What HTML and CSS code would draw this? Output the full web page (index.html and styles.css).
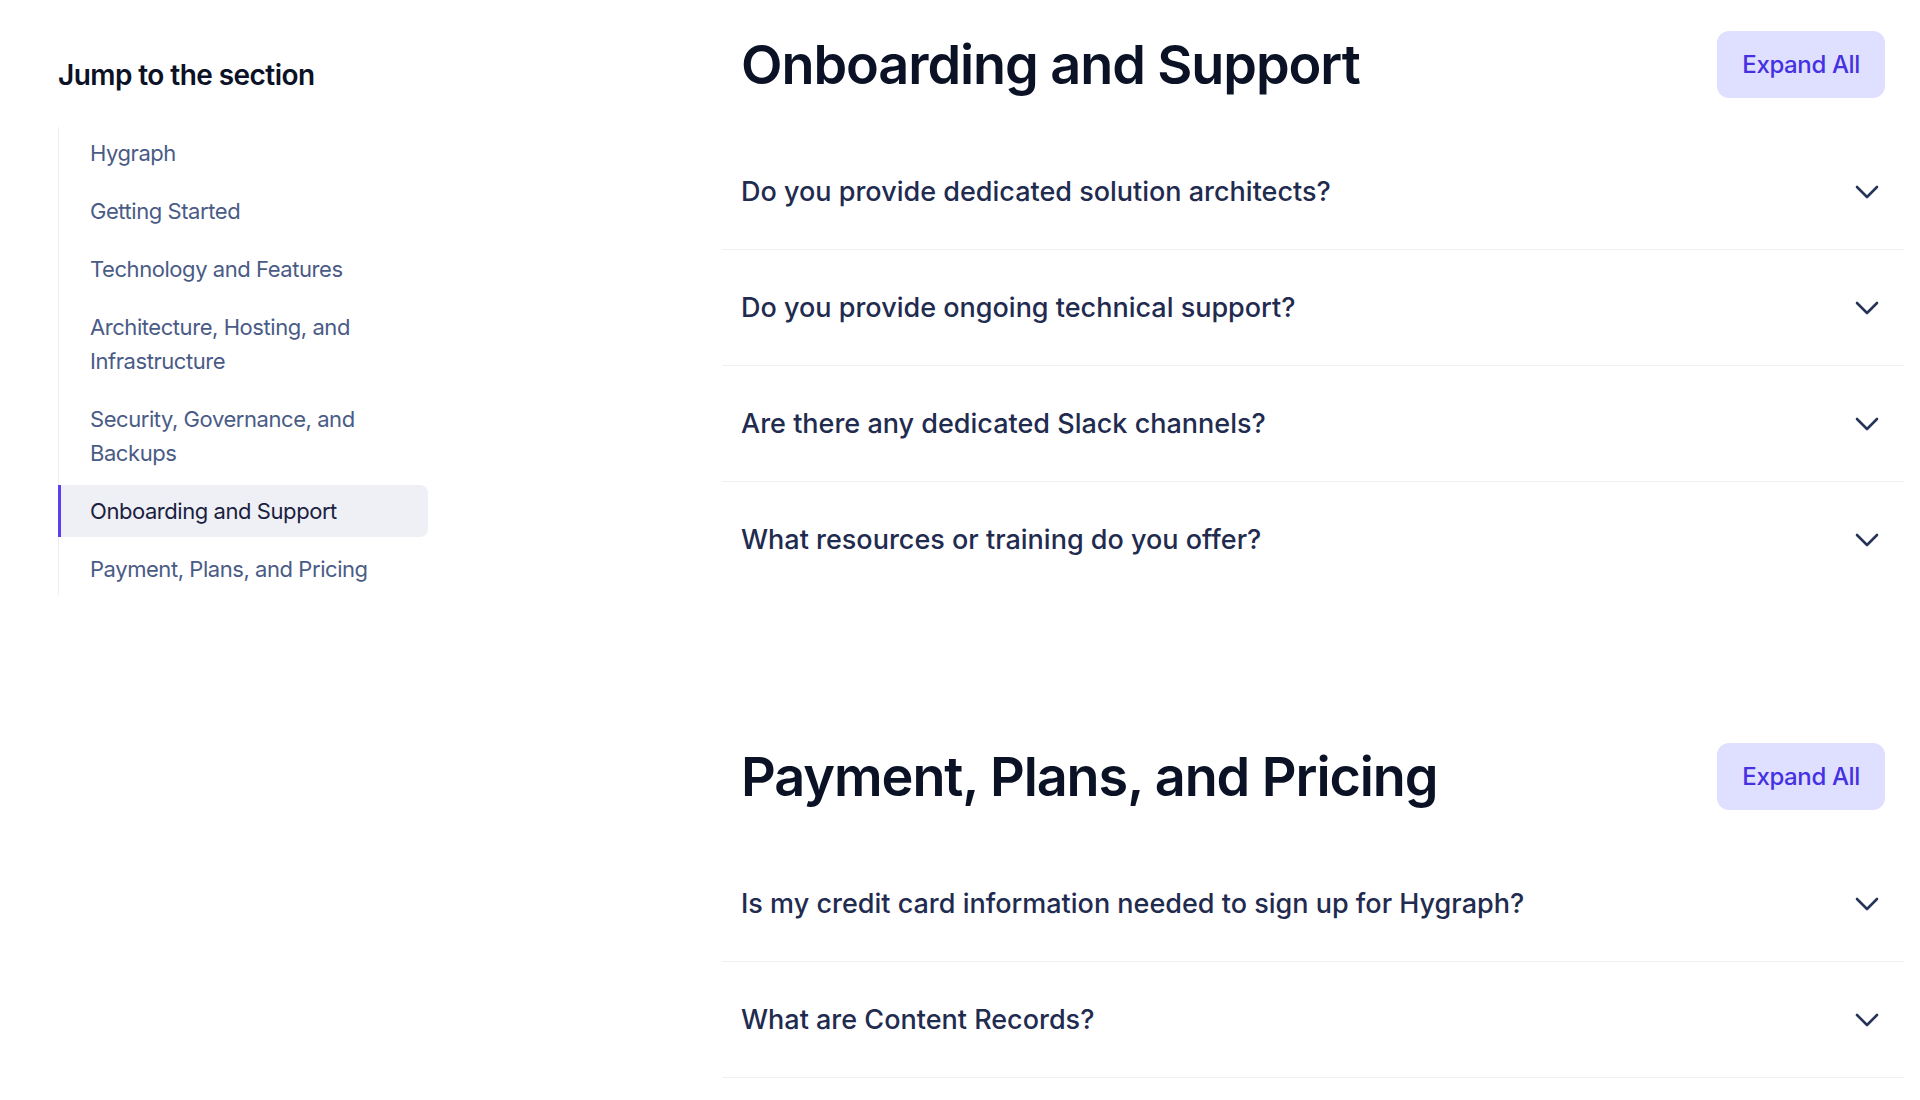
FILE: index.html
```html
<!DOCTYPE html>
<html lang="en">
<head>
    <meta charset="UTF-8">
    <meta name="viewport" content="width=device-width, initial-scale=1.0">
    <title>FAQ - Hygraph</title>
    <link rel="stylesheet" href="styles.css">
</head>
<body>
    <div class="faq-page">
        <!-- left nav -->
        <aside class="jump-nav">
            <h3>Jump to the section</h3>
            <ul class="jump-list">
                <li><a href="#hygraph">Hygraph</a></li>
                <li><a href="#getting-started">Getting Started</a></li>
                <li><a href="#technology">Technology and Features</a></li>
                <li><a href="#architecture">Architecture, Hosting, and Infrastructure</a></li>
                <li><a href="#security">Security, Governance, and Backups</a></li>
                <li class="active"><a href="#onboarding">Onboarding and Support</a></li>
                <li><a href="#payment">Payment, Plans, and Pricing</a></li>
            </ul>
        </aside>

        <main class="faq-main">
            <section class="faq-section" id="onboarding">
                <div class="section-head">
                    <h2>Onboarding and Support</h2>
                    <button class="btn-expand">Expand All</button>
                </div>
                <details class="faq-item">
                    <summary>Do you provide dedicated solution architects?
                        <svg class="chevron" viewBox="0 0 24 14"><path d="M2 2 L12 12 L22 2"/></svg>
                    </summary>
                </details>
                <details class="faq-item">
                    <summary>Do you provide ongoing technical support?
                        <svg class="chevron" viewBox="0 0 24 14"><path d="M2 2 L12 12 L22 2"/></svg>
                    </summary>
                </details>
                <details class="faq-item">
                    <summary>Are there any dedicated Slack channels?
                        <svg class="chevron" viewBox="0 0 24 14"><path d="M2 2 L12 12 L22 2"/></svg>
                    </summary>
                </details>
                <details class="faq-item no-border">
                    <summary>What resources or training do you offer?
                        <svg class="chevron" viewBox="0 0 24 14"><path d="M2 2 L12 12 L22 2"/></svg>
                    </summary>
                </details>
            </section>

            <section class="faq-section" id="payment">
                <div class="section-head">
                    <h2>Payment, Plans, and Pricing</h2>
                    <button class="btn-expand">Expand All</button>
                </div>
                <details class="faq-item">
                    <summary>Is my credit card information needed to sign up for Hygraph?
                        <svg class="chevron" viewBox="0 0 24 14"><path d="M2 2 L12 12 L22 2"/></svg>
                    </summary>
                </details>
                <details class="faq-item">
                    <summary>What are Content Records?
                        <svg class="chevron" viewBox="0 0 24 14"><path d="M2 2 L12 12 L22 2"/></svg>
                    </summary>
                </details>
            </section>
        </main>
    </div>
</body>
</html>
```

FILE: styles.css
```css
* { margin: 0; padding: 0; box-sizing: border-box; }

body {
    font-family: 'Inter', 'Liberation Sans', sans-serif;
    background: white;
    color: #0b1226;
}

.faq-page {
    display: grid;
    grid-template-columns: 370px 1fr;
    column-gap: 294px;
    padding: 31px 16px 0 58px;
}

/* sidebar */
.jump-nav h3 {
    font-size: 28px;
    font-weight: 600;
    line-height: 36px;
    letter-spacing: -0.02em;
    color: #0b1226;
    margin-top: 26px;
    margin-bottom: 34px;
}

.jump-list {
    list-style: none;
    border-left: 1px solid #eceef3;
    display: flex;
    flex-direction: column;
    gap: 6px;
}

.jump-list li {
    margin-left: -1px;
    border-left: 3px solid transparent;
    border-radius: 0 8px 8px 0;
    padding: 9px 20px 9px 29px;
}

.jump-list a {
    display: block;
    font-size: 22px;
    line-height: 34px;
    letter-spacing: -0.02em;
    color: #4a5b86;
    text-decoration: none;
}

.jump-list li.active {
    background: #eff0f5;
    border-left-color: #5b3ef2;
}

.jump-list li.active a {
    color: #1a2140;
}

/* main column */
.faq-section + .faq-section {
    margin-top: 146px;
}

.section-head {
    display: flex;
    align-items: center;
    justify-content: space-between;
    padding: 0 19px;
    margin-bottom: 36px;
}

.section-head h2 {
    font-size: 54px;
    font-weight: 600;
    letter-spacing: -0.02em;
    line-height: 67px;
    color: #0b1226;
}

.btn-expand {
    font-family: inherit;
    font-size: 24px;
    font-weight: 500;
    letter-spacing: -0.015em;
    color: #4531e2;
    background: #dfe0ff;
    border: none;
    border-radius: 12px;
    height: 67px;
    padding: 0 25px;
    cursor: pointer;
}

.faq-item {
    border-bottom: 1px solid #eef0f4;
}

.faq-item.no-border {
    border-bottom: none;
}

.faq-item summary {
    list-style: none;
    display: flex;
    align-items: center;
    justify-content: space-between;
    padding: 41px 25px 40px 19px;
    font-size: 27px;
    font-weight: 500;
    line-height: 34px;
    color: #1f2b4f;
    cursor: pointer;
}

.faq-item summary::-webkit-details-marker {
    display: none;
}

.chevron {
    width: 24px;
    height: 14px;
    fill: none;
    stroke: #27345a;
    stroke-width: 2.6;
    stroke-linecap: round;
    stroke-linejoin: round;
}
```
